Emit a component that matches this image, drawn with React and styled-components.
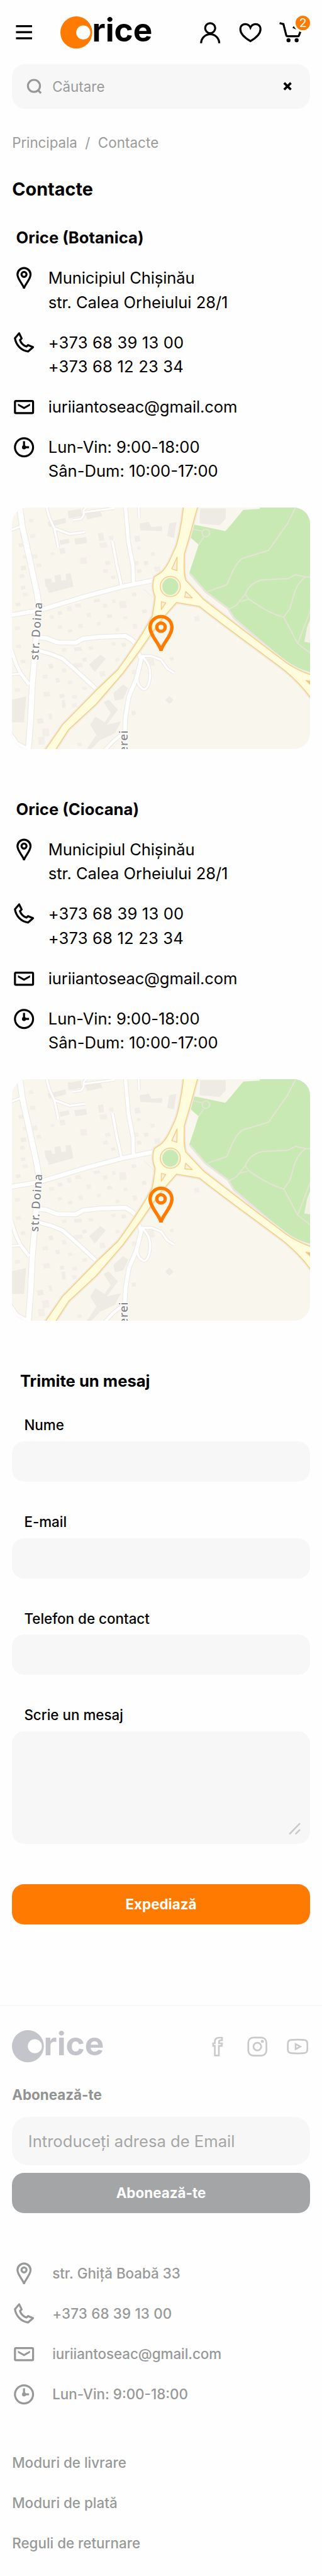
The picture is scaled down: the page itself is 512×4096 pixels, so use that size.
import React from "react";
import styled, { createGlobalStyle } from "styled-components";

/* One design unit is 0.8px. */
const u = (n) => `${n * 0.8}px`;

const ORANGE = "#ff7a00";
const GREY = "#979998";
const FIELD = "#f7f7f7";

const GlobalStyle = createGlobalStyle`
  *, *::before, *::after { box-sizing: border-box; }
  body {
    margin: 0;
    background: #fefefe;
    color: #000;
    font-family: Inter, "Liberation Sans", sans-serif;
  }
  svg { display: block; }
  button { font: inherit; border: 0; margin: 0; outline: 0; }
`;

const Page = styled.div`
  width: ${u(640)};
  height: 4096px;
  overflow: hidden;
`;

/* ---------- Icons ---------- */

const IconSvg = styled.svg`
  flex: none;
  width: ${(p) => u(p.$size || 48)};
  height: ${(p) => u(p.$size || 48)};
  fill: none;
  stroke: currentColor;
  stroke-width: 4;
`;

const Icon = ({ size, children, className }) => (
  <IconSvg $size={size} viewBox="0 0 48 48" className={className}>{children}</IconSvg>
);

const PinIcon = ({ size, className }) => (
  <Icon size={size} className={className}>
    <path d="M24 45C24 38.5 11 27 11 17a13 13 0 0 1 26 0C37 27 24 38.5 24 45Z" strokeLinejoin="bevel" />
    <circle cx="24" cy="16.7" r="5" />
  </Icon>
);
const PhoneIcon = () => (
  <Icon>
    <path
      d="M14.3 5L6 14.8C7.8 28 18.5 39.6 32.2 41L42 32.6L32 28.4L28.8 31.2C23 29.6 17.6 24.2 16 18.4L19.3 15.2Z"
      strokeLinejoin="round"
    />
  </Icon>
);
const MailIcon = () => (
  <Icon>
    <rect x="6" y="12" width="36" height="24" rx="2" />
    <path d="M12 17.2L24 23.8L36 17.2V21.4L24 28.2L12 21.4Z" fill="currentColor" stroke="none" />
  </Icon>
);
const ClockIcon = () => (
  <Icon>
    <circle cx="24" cy="24" r="18" />
    <path d="M24 12V24H34" />
    <circle cx="24" cy="24" r="4" fill="currentColor" stroke="none" />
  </Icon>
);
const MenuIcon = () => (
  <Icon>
    <path d="M8 12H40M8 24H40M8 36H40" />
  </Icon>
);
const UserIcon = () => (
  <Icon>
    <circle cx="24" cy="16" r="10" />
    <path d="M6 46a18 18 0 0 1 36 0" />
  </Icon>
);
const HeartIcon = () => (
  <Icon>
    <path d="M24 41.8C16 37.2 4 29 4 18.2C4 11 9 8 13.8 8C19 8 22.3 11 24 15C25.7 11 29 8 34.2 8C39 8 44 11 44 18.2C44 29 32 37.2 24 41.8Z" />
  </Icon>
);
const CartIcon = () => (
  <Icon>
    <path d="M2 6L9.6 8L15.3 30.5Q15.7 32 17.3 32H38.5Q40 32 40.5 30.5L43.2 23" />
    <path d="M27.5 15.2L30 12L35.2 18.8Z" fill="currentColor" stroke="none" />
    <circle cx="19.7" cy="40" r="4" fill="currentColor" stroke="none" />
    <circle cx="35.8" cy="40" r="4" fill="currentColor" stroke="none" />
  </Icon>
);
const FacebookIcon = () => (
  <Icon>
    <path
      strokeWidth="3.3"
      d="M33.8 6.3H28.5C22.5 6.3 19.5 9.3 19.5 14V17.5H16.2V22.6H19.5V41.7H27.5V22.6H33.2L33.8 17.5H27.8V14.5Q27.8 11.6 30.6 11.6H33.8Z"
    />
  </Icon>
);
const InstagramIcon = () => (
  <Icon>
    <rect x="6" y="6" width="36" height="36" rx="10" strokeWidth="3.4" />
    <circle cx="24" cy="24" r="7.7" strokeWidth="3.4" />
    <circle cx="34" cy="13.7" r="3" fill="currentColor" stroke="none" />
  </Icon>
);
const YoutubeIcon = () => (
  <Icon>
    <path
      strokeWidth="3.4"
      d="M11.5 10.8Q24 9.7 36.5 10.8Q43 11.3 43.3 17Q43.7 24 43.3 31Q43 36.5 36.5 37Q24 38.2 11.5 37Q5 36.5 4.7 31Q4.3 24 4.7 17Q5 11.3 11.5 10.8Z"
    />
    <path strokeWidth="3.2" d="M20 19L29.5 24L20 29.2Z" />
  </Icon>
);

const SearchSvg = styled.svg`
  width: ${u(32)};
  height: ${u(32)};
  fill: none;
  stroke: ${GREY};
  stroke-width: 4;
`;
const CloseSvg = styled.svg`
  margin-left: auto;
  width: ${u(18)};
  height: ${u(18)};
  fill: none;
  stroke: #000;
  stroke-width: 4.6;
`;

/* ---------- Logo ---------- */

const LogoSvg = styled.svg`
  width: ${u(184)};
  height: ${u(64)};
  overflow: visible;
`;

const LogoWord = styled.text`
  font-family: Inter, sans-serif;
  font-weight: 700;
  font-size: 64px;
`;

const Logo = ({ mark, word }) => (
  <LogoSvg viewBox="0 0 184 64">
    <ellipse cx="31.7" cy="32" rx="31.7" ry="32" fill={mark} />
    <circle cx="45.5" cy="32" r="14" fill="#fefefe" />
    <LogoWord x="63" y="50" textLength="120" lengthAdjust="spacingAndGlyphs" fill={word}>rice</LogoWord>
  </LogoSvg>
);

/* ---------- Header ---------- */

const Header = styled.header`
  display: flex;
  align-items: center;
  height: ${u(64)};
  margin-top: ${u(32)};
  padding: 0 ${u(38)} 0 ${u(24)};
`;
const LogoSlot = styled.div`
  margin-left: ${u(48)};
`;
const Actions = styled.nav`
  display: flex;
  gap: ${u(32)};
  margin-left: auto;
`;
const CartSlot = styled.div`
  position: relative;
`;
const Badge = styled.span`
  position: absolute;
  top: ${u(-12)};
  left: ${u(30)};
  display: flex;
  align-items: center;
  justify-content: center;
  width: ${u(36)};
  height: ${u(36)};
  border: ${u(4)} solid #fefefe;
  border-radius: 50%;
  background: ${ORANGE};
  color: #fff;
  font-size: ${u(24)};
  line-height: 1;
`;

const SearchBar = styled.div`
  display: flex;
  align-items: center;
  height: ${u(88)};
  margin: ${u(32)} ${u(24)} 0;
  padding: 0 ${u(35)} 0 ${u(28)};
  border-radius: ${u(26)};
  background: ${FIELD};
`;
const SearchText = styled.span`
  margin-left: ${u(20)};
  color: #9b9b9b;
  font-size: ${u(28)};
`;

/* ---------- Main ---------- */

const Main = styled.main`
  padding: 0 ${u(24)};
`;
const Breadcrumb = styled.div`
  display: flex;
  margin-top: ${u(44)};
  gap: ${u(15.5)};
  color: #9b9b9b;
  font-size: ${u(28)};
  line-height: ${u(48)};
`;
const PageTitle = styled.h1`
  margin: ${u(45)} 0 0;
  font-size: ${u(36)};
  line-height: ${u(48)};
`;
const SectionTitle = styled.h2`
  margin: 0;
  padding-left: ${(p) => u(p.$indent)};
  font-size: ${u(32)};
  font-weight: 700;
  line-height: ${u(48)};
`;
const Location = styled.section`
  margin-top: ${(p) => u(p.$gap)};
`;
const ContactList = styled.ul`
  display: flex;
  flex-direction: column;
  gap: ${u(32)};
  margin: ${(p) => u(p.$top)} 0 0;
  padding: 0;
  list-style: none;
`;
const ContactRow = styled.li`
  display: flex;
  gap: ${u(24)};
  font-size: ${u(32)};
  line-height: ${u(48)};
`;
const Line = styled.span`
  display: block;
  white-space: nowrap;
  letter-spacing: ${(p) => u(p.$track || 0)};
`;

/* ---------- Map ---------- */

const MapFrame = styled.div`
  position: relative;
  height: ${u(480)};
  margin-top: ${u(48)};
  border-radius: ${u(32)};
  overflow: hidden;
  background: #f9f6ee;
`;
const MapSvg = styled.svg`
  width: 100%;
  height: 100%;
  fill: none;
  stroke-linejoin: round;
  path, circle, ellipse { vector-effect: non-scaling-stroke; }
`;
const MapPin = styled(PinIcon)`
  position: absolute;
  left: ${u(256)};
  top: ${u(210)};
  color: ${ORANGE};
`;
const StreetName = styled.text`
  font-family: "Noto Sans", sans-serif;
  font-size: 18.5px;
  font-weight: 500;
  fill: #858585;
  stroke: #fff;
  stroke-width: 2.5px;
  paint-order: stroke;
`;

const houses = [
  [95, 120, 30, 28], [98, 205, 28, 26], [145, 210, 30, 28], [90, 265, 30, 26], [155, 330, 30, 30], [110, 335, 28, 24],
  [100, 400, 30, 30], [175, 385, 28, 26], [95, 450, 28, 26], [100, 520, 26, 24], [110, 560, 28, 26], [140, 120, 25, 24],
  [290, 295, 30, 36], [245, 320, 24, 20], [390, 350, 35, 42], [478, 205, 30, 50], [484, 262, 40, 34], [530, 220, 26, 30],
  [655, 222, 30, 38], [665, 285, 22, 22], [732, 318, 26, 26], [700, 372, 24, 26], [655, 372, 22, 26], [750, 405, 34, 34],
  [665, 420, 26, 26], [510, 372, 30, 26], [500, 420, 28, 26], [540, 460, 24, 22], [520, 535, 20, 20], [580, 608, 38, 48],
  [640, 560, 26, 24], [545, 600, 20, 26], [500, 625, 26, 28], [455, 598, 34, 22], [365, 625, 32, 26], [325, 640, 26, 34],
  [280, 670, 26, 26], [240, 695, 26, 26], [420, 680, 26, 30], [520, 690, 28, 24], [600, 700, 24, 22], [645, 745, 26, 34],
  [690, 660, 26, 26], [470, 735, 24, 24], [280, 755, 26, 24], [330, 780, 24, 20], [380, 745, 26, 30], [560, 770, 24, 24],
  [590, 860, 26, 26], [540, 855, 26, 24], [430, 880, 26, 24], [360, 885, 40, 26], [300, 890, 26, 24], [485, 1028, 30, 36],
  [400, 950, 24, 26], [355, 980, 50, 30], [560, 950, 24, 24], [235, 985, 26, 30], [300, 1010, 26, 30], [205, 1050, 30, 26],
  [270, 1070, 24, 30], [330, 1085, 26, 24], [210, 1150, 36, 34], [290, 1165, 26, 26], [350, 1170, 28, 26], [400, 1120, 26, 24],
  [300, 1200, 22, 50], [350, 1220, 26, 28], [235, 1280, 22, 40], [180, 1310, 34, 34], [205, 1370, 38, 50], [185, 1420, 36, 50],
  [640, 1265, 24, 28], [375, 1455, 26, 24], [75, 870, 30, 24], [100, 960, 26, 24], [70, 760, 30, 26], [70, 1130, 30, 26],
  [826, 945, 22, 22], [945, 700, 28, 34], [105, 1060, 24, 22], [75, 620, 28, 24], [720, 950, 34, 50], [640, 1020, 24, 30],
];

const yellowRoad =
  "M895 40C888 130 868 270 848 312C828 368 812 412 786 440L752 468C744 500 742 545 756 584C752 640 745 680 742 702C700 800 640 910 575 1020L485 1125L305 1350L215 1510L265 1510L335 1378L470 1225L600 1040L685 900L780 732L860 620L972 644C1080 750 1240 890 1385 1024C1430 1070 1480 1130 1520 1200L1520 1054C1470 1034 1420 1002 1390 975L1180 780L990 600L905 488C895 450 897 400 898 332L925 220L965 40Z";

const whiteRoads = [
  ["M97 54L110 170L150 390L182 570L190 640L175 850L158 1110L150 1320L138 1510", 8.5],
  ["M40 698L190 668L420 582L600 524L755 486", 6.5],
  ["M612 54L626 260L648 400L650 500", 5.5],
  ["M676 54L678 118", 3],
  ["M228 54L240 110L265 178L275 230L284 292", 3.5],
  ["M265 178L340 212L415 200", 3.5],
  ["M355 128L395 122L408 100L408 70L420 54", 3],
  ["M408 82L560 58", 3],
  ["M548 254L570 400L592 520", 4],
  ["M40 195L98 168", 3.5],
  ["M190 828L225 832L280 858L370 860L405 836L480 826L612 820L640 840L668 872", 6.5],
  ["M185 906L250 928L305 955L375 1030L470 1138", 5.5],
  ["M55 900L80 990L100 1040L142 1110", 5],
  ["M50 1050L100 1045", 3],
  ["M50 1400L85 1460L130 1490", 5],
  ["M672 910L688 960L665 1075L628 1180L612 1300L608 1400", 6],
  ["M600 1400L550 1450L505 1510", 4.5],
  ["M690 940C720 970 740 1020 728 1090C720 1135 705 1145 690 1130C675 1115 668 1095 670 1070", 3.5],
  ["M690 940L740 940L785 962L815 1015L848 1040", 3.5],
];

const StreetMap = () => (
  <MapFrame>
    <MapSvg viewBox="59 54 1450 1440" preserveAspectRatio="none">
      <g fill="#eeebe4">
        {houses.map(([x, y, w, h], i) => (
          <path key={i} d={`M${x} ${y + 4}L${x + w - 5} ${y}L${x + w} ${y + h - 5}L${x + 5} ${y + h}Z`} opacity={i % 3 ? 0.6 : 0.9} />
        ))}
        <path d="M975 60H1100V120L1070 160L972 150Z" />
        <path d="M232 140L320 115L322 145L240 170ZM415 90L485 70L500 105L425 125ZM330 75L395 62L400 105L335 120Z" />
        <path d="M362 240L420 230L425 265L368 275ZM290 250L335 240L340 265L295 278Z" />
        <path d="M680 150L725 140L738 170L790 165L790 195L685 190ZM825 150L860 140L848 235L815 225Z" />
        <path d="M218 480L250 478L256 500L270 498L266 460L295 452L300 490L322 485L320 450L345 445L358 525L238 565L232 540L222 520Z" />
        <path d="M435 990L490 930L516 955L462 1035Z" />
        <path d="M553 1160L600 1110L625 1130L600 1195L560 1205Z" />
        <path d="M505 1215L530 1200L575 1260L520 1350L590 1330L560 1400L490 1440L440 1500L420 1500L470 1410L440 1350L465 1300L510 1335L540 1280Z" />
        <path d="M60 1200L128 1180L118 1335L60 1335Z" />
        <path d="M826 1178L846 1202L826 1225L804 1202Z" />
        <path d="M700 540L745 590" stroke="#edeae3" strokeWidth="1" />
      </g>
      <g>
        <path
          d="M1265 54H1520V1040C1470 1020 1420 1000 1390 970L1140 710L1110 660L1000 548L922 445L968 275L930 235L944 155L1098 195L1130 150L1185 68L1265 62Z"
          fill="#c8e8b4"
        />
        <path d="M1520 690L1495 770L1482 855L1520 862Z" fill="#f3f0e5" />
        <g stroke="#e4e4d3" strokeWidth="2">
          <path d="M1440 54L1400 150L1308 310L1180 358C1160 370 1150 400 1135 430L1105 515L1012 554" />
          <path d="M1115 660L1150 638L1195 570L1212 600L1170 615M1195 570C1210 520 1240 495 1280 485L1400 478L1440 455L1490 468L1520 468" />
          <path d="M1212 600C1260 640 1320 690 1382 708L1410 660C1430 600 1430 520 1488 468" />
          <path d="M1382 708L1450 865L1520 930M1450 865L1520 640" />
          <path d="M940 182L985 195M992 230L968 275" />
          <ellipse cx="1003" cy="206" rx="18" ry="23" />
          <path d="M925 448L1000 555L1110 655L1140 715L1390 975" stroke="#e9e5dc" strokeWidth="3" />
        </g>
      </g>
      <g stroke="#eae7e1">
        {whiteRoads.map(([d, w]) => <path key={d} d={d} strokeWidth={w + 2} />)}
      </g>
      <g stroke="#fff">
        {whiteRoads.map(([d, w]) => <path key={d} d={d} strokeWidth={w} />)}
      </g>
      <path d={yellowRoad} stroke="#eeeae3" strokeWidth="5" />
      <path d={yellowRoad} fill="#fefcdc" stroke="#f6cf85" strokeWidth="1.5" />
      <g stroke="#f6cf85" strokeWidth="1.5">
        <ellipse cx="830" cy="525" rx="49" ry="60" fill="#f4f3dc" />
        <ellipse cx="830" cy="525" rx="39" ry="50" fill="#c8e8b4" stroke="none" />
        <path d="M863 350L837 420L862 430Z" fill="#f8f0e3" />
        <path d="M905 555L900 588L937 593Z" fill="#f8f0e3" />
        <path d="M786 616L808 622L786 662Z" fill="#f8f0e3" />
        <path d="M1490 1085L1520 1090V1120Z" fill="#e0c88d" />
      </g>
      <g transform="translate(187 965) scale(3.062 3.750) rotate(-86)">
        <StreetName textLength="92">str. Doina</StreetName>
      </g>
      <g transform="translate(622 1518) scale(3.062 3.750) rotate(-90)">
        <StreetName textLength="36">erei</StreetName>
      </g>
    </MapSvg>
    <MapPin size={80} />
  </MapFrame>
);

/* ---------- Form ---------- */

const Form = styled.form`
  margin-top: ${u(96)};
`;
const Fields = styled.div`
  display: flex;
  flex-direction: column;
  gap: ${u(60)};
  margin-top: ${u(44)};
`;
const Field = styled.label`
  display: flex;
  flex-direction: column;
  gap: ${u(12)};
  font-size: ${u(28)};
  font-weight: 500;
  line-height: ${u(40)};
`;
const FieldLabel = styled.span`
  padding-left: ${u(24)};
`;
const FieldBox = styled.div`
  display: flex;
  align-items: flex-end;
  justify-content: flex-end;
  height: ${(p) => u(p.$tall ? 224 : 80)};
  padding: ${u(18)};
  border-radius: ${u(24)};
  background: ${FIELD};
`;
const Grip = styled.svg`
  width: ${u(24)};
  height: ${u(24)};
  fill: none;
  stroke: #c9c9c9;
  stroke-width: 3.2;
`;
const Button = styled.button`
  display: block;
  width: 100%;
  height: ${u(80)};
  margin-top: ${(p) => u(p.$top)};
  padding: 0;
  border-radius: ${u(24)};
  background: ${(p) => p.$color};
  color: #fff;
  font-size: ${u(28)};
  font-weight: 700;
  line-height: ${u(80)};
`;

/* ---------- Footer ---------- */

const Footer = styled.footer`
  margin-top: ${u(160)};
  padding: ${u(48)} ${u(24)} 0;
  border-top: 2px solid #f8f8f8;
  color: ${GREY};
`;
const FooterTop = styled.div`
  display: flex;
  align-items: center;
  justify-content: space-between;
`;
const Socials = styled.div`
  display: flex;
  gap: ${u(32)};
  color: #cacaca;
`;
const FooterTitle = styled.h3`
  margin: ${u(44)} 0 ${u(24)};
  color: #919392;
  font-size: ${u(28)};
  font-weight: 700;
  line-height: ${u(40)};
`;
const EmailBox = styled.div`
  display: flex;
  align-items: center;
  height: ${u(96)};
  padding-left: ${u(32)};
  border-radius: ${u(32)};
  background: ${FIELD};
  color: #a6a6a6;
  font-size: ${u(32)};
`;
const FooterRow = styled.li`
  display: flex;
  gap: ${u(32)};
  font-size: ${u(28)};
  font-weight: 500;
  line-height: ${u(48)};
`;
const FooterLinks = styled.nav`
  display: flex;
  flex-direction: column;
  gap: ${u(32)};
  margin-top: ${u(88)};
  font-size: ${u(28)};
  font-weight: 500;
  line-height: ${u(48)};
`;

const Branch = ({ name, gap }) => (
  <Location $gap={gap}>
    <SectionTitle $indent={8}>{name}</SectionTitle>
    <ContactList $top={32}>
      <ContactRow>
        <PinIcon />
        <div><Line $track={-0.16}>Municipiul Chișinău</Line><Line $track={-0.08}>str. Calea Orheiului 28/1</Line></div>
      </ContactRow>
      <ContactRow>
        <PhoneIcon />
        <div><Line $track={0.2}>+373 68 39 13 00</Line><Line $track={0.2}>+373 68 12 23 34</Line></div>
      </ContactRow>
      <ContactRow>
        <MailIcon />
        <Line $track={-0.18}>iuriiantoseac@gmail.com</Line>
      </ContactRow>
      <ContactRow>
        <ClockIcon />
        <div><Line $track={-0.08}>Lun-Vin: 9:00-18:00</Line><Line>Sân-Dum: 10:00-17:00</Line></div>
      </ContactRow>
    </ContactList>
    <StreetMap />
  </Location>
);

export default function App() {
  return (
    <Page>
      <GlobalStyle />
      <Header>
        <MenuIcon />
        <LogoSlot><Logo mark={ORANGE} word="#000" /></LogoSlot>
        <Actions>
          <UserIcon />
          <HeartIcon />
          <CartSlot><CartIcon /><Badge>2</Badge></CartSlot>
        </Actions>
      </Header>
      <SearchBar>
        <SearchSvg viewBox="0 0 32 32">
          <circle cx="15" cy="14.5" r="12" />
          <path d="M22.5 22.5L29 29" />
        </SearchSvg>
        <SearchText>Căutare</SearchText>
        <CloseSvg viewBox="0 0 18 18"><path d="M2.3 2.3L15.7 15.7M15.7 2.3L2.3 15.7" /></CloseSvg>
      </SearchBar>
      <Main>
        <Breadcrumb><Line $track={-0.1}>Principala</Line><span>/</span><Line $track={0.1}>Contacte</Line></Breadcrumb>
        <PageTitle>Contacte</PageTitle>
        <Branch name="Orice (Botanica)" gap={48} />
        <Branch name="Orice (Ciocana)" gap={96} />
        <Form>
          <SectionTitle $indent={16}>Trimite un mesaj</SectionTitle>
          <Fields>
            {["Nume", "E-mail", "Telefon de contact"].map((label) => (
              <Field key={label}><FieldLabel>{label}</FieldLabel><FieldBox /></Field>
            ))}
            <Field>
              <FieldLabel>Scrie un mesaj</FieldLabel>
              <FieldBox $tall>
                <Grip viewBox="0 0 24 24"><path d="M1.5 23L22.5 1.5M13.5 23L22.5 14" /></Grip>
              </FieldBox>
            </Field>
          </Fields>
          <Button type="button" $color={ORANGE} $top={80}>Expediază</Button>
        </Form>
      </Main>
      <Footer>
        <FooterTop>
          <Logo mark="#c4c5ca" word="#c4c5ca" />
          <Socials><FacebookIcon /><InstagramIcon /><YoutubeIcon /></Socials>
        </FooterTop>
        <FooterTitle>Abonează-te</FooterTitle>
        <EmailBox>Introduceți adresa de Email</EmailBox>
        <Button type="button" $color="#a3a5a7" $top={16}>Abonează-te</Button>
        <ContactList $top={96}>
          <FooterRow><PinIcon /><Line>str. Ghiță Boabă 33</Line></FooterRow>
          <FooterRow><PhoneIcon /><Line $track={0.2}>+373 68 39 13 00</Line></FooterRow>
          <FooterRow><MailIcon /><Line $track={-0.08}>iuriiantoseac@gmail.com</Line></FooterRow>
          <FooterRow><ClockIcon /><Line>Lun-Vin: 9:00-18:00</Line></FooterRow>
        </ContactList>
        <FooterLinks>
          <span>Moduri de livrare</span>
          <span>Moduri de plată</span>
          <span>Reguli de returnare</span>
        </FooterLinks>
      </Footer>
    </Page>
  );
}
